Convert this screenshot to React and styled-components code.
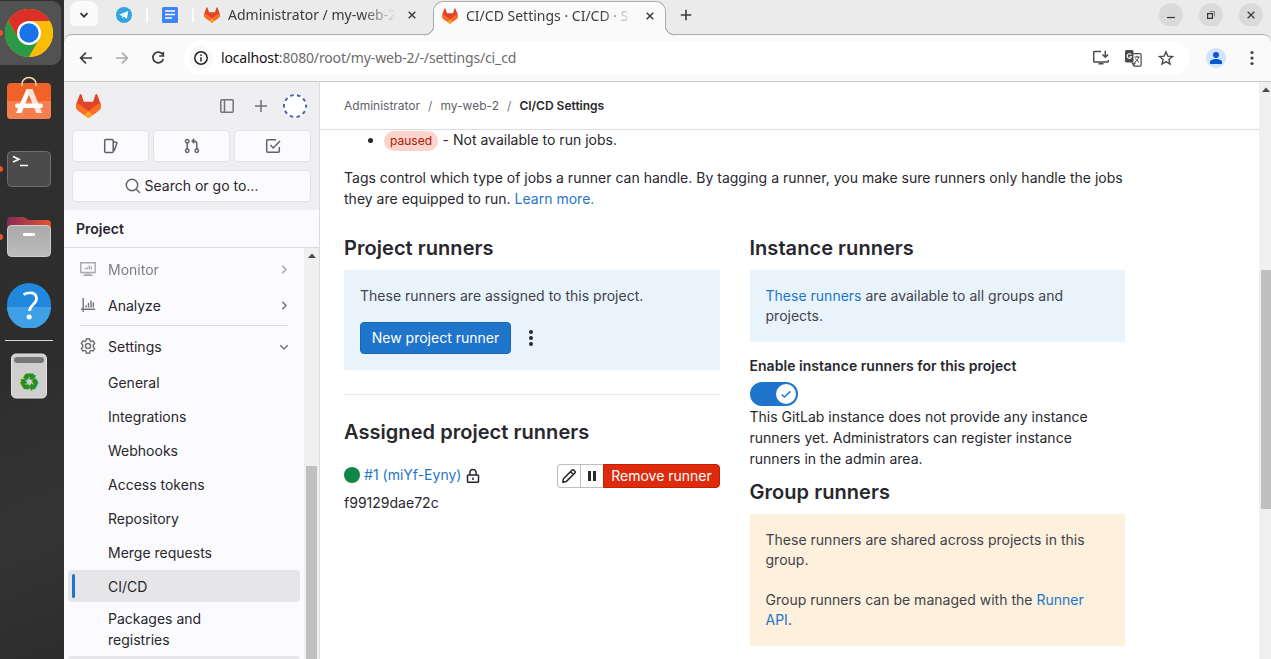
import React from "react";
import styled, { createGlobalStyle } from "styled-components";

const GlobalStyle = createGlobalStyle`
  * { box-sizing: border-box; }
  html, body { margin: 0; padding: 0; overflow: hidden; }
  h2, p, ul { margin: 0; padding: 0; }
  button { font: inherit; padding: 0; margin: 0; }
  svg { display: block; flex: none; }
`;

const uiFont = `"Noto Sans", "Open Sans", sans-serif`;
const pageFont = `Inter, "Liberation Sans", sans-serif`;

const Desktop = styled.div`
  display: flex;
  width: 1271px;
  height: 659px;
  overflow: hidden;
  background: #fff;
`;

/* ---------- dock ---------- */
const Dock = styled.aside`
  flex: none;
  display: flex;
  flex-direction: column;
  gap: 4px;
  width: 64px;
  padding-top: 1px;
  background: linear-gradient(160deg, #303030 0%, #2d2d2d 55%, #303030 62%, #343434 80%, #2d2d2d 100%);
`;
const DockItem = styled.div`
  flex: none;
  position: relative;
  display: flex;
  align-items: center;
  justify-content: center;
  width: 61px;
  height: 64px;
  padding-right: 3px;
  padding-bottom: ${(p) => p.$lift || 0}px;
  border-radius: 0 9px 9px 0;
  background: ${(p) => (p.$active ? "#525252" : "transparent")};
  &::before {
    content: "";
    display: ${(p) => (p.$running ? "block" : "none")};
    position: absolute;
    left: -3px;
    top: 29px;
    width: 6px;
    height: 6px;
    border-radius: 50%;
    background: #e95420;
  }
`;
const DockRule = styled.div`
  width: 48px;
  height: 1px;
  margin: -1px 0 -1px 5px;
  background: #d8d8d8;
`;
const Recycle = styled.text`
  font: 23px "DejaVu Sans", sans-serif;
`;

/* ---------- browser frame ---------- */
const Browser = styled.div`
  flex: 1;
  min-width: 0;
  display: flex;
  flex-direction: column;
`;
const TabStrip = styled.div`
  flex: none;
  display: flex;
  align-items: center;
  height: 34px;
  padding: 0 8px 4px 6px;
  background: #ebebeb;
  font-family: ${uiFont};
  font-size: 14px;
  color: #3b3b3b;
`;
const TabSearch = styled.button`
  width: 28px;
  height: 28px;
  margin-right: 18px;
  border: 0;
  border-radius: 9px;
  background: #fafafa;
  display: grid;
  place-items: center;
`;
const TabDivider = styled.i`
  width: 2px;
  height: 16px;
  margin: 0 ${(p) => p.$right}px 0 ${(p) => p.$left}px;
  border-radius: 1px;
  background: #fafafa;
`;
const Tab = styled.div`
  display: flex;
  align-items: center;
  height: 30px;
  width: ${(p) => p.$width}px;
`;
const ActiveTab = styled(Tab)`
  position: relative;
  align-self: flex-start;
  height: 35px;
  padding: 0 10px 6px 8px;
  margin-top: 1px;
  border: 1px solid #acacac;
  border-bottom: 0;
  border-radius: 10px 10px 0 0;
  background: #fafafa;
  z-index: 2;
  &::before,
  &::after {
    content: "";
    position: absolute;
    bottom: 0;
    width: 10px;
    height: 11px;
  }
  &::before {
    left: -10px;
    background: radial-gradient(circle at 0 0, #ebebeb 9px, #acacac 9.5px 10.2px, #fafafa 10.7px);
  }
  &::after {
    right: -10px;
    background: radial-gradient(circle at 100% 0, #ebebeb 9px, #acacac 9.5px 10.2px, #fafafa 10.7px);
  }
`;
const TabTitle = styled.span`
  flex: none;
  width: ${(p) => p.$width}px;
  margin-left: 8px;
  overflow: hidden;
  white-space: nowrap;
  line-height: 20px;
  mask-image: linear-gradient(90deg, #000 calc(100% - 34px), transparent);
`;
const Spacer = styled.span`
  flex: none;
  width: ${(p) => p.$width}px;
`;
const NewTab = styled.div`
  display: grid;
  place-items: center;
  width: 28px;
  height: 28px;
  margin-left: 6px;
`;
const WindowButtons = styled.div`
  display: flex;
  gap: 16px;
  margin-left: auto;
`;
const WindowButton = styled.button`
  width: 24px;
  height: 24px;
  border: 0;
  border-radius: 50%;
  background: #dadada;
  display: grid;
  place-items: center;
`;
const Toolbar = styled.div`
  flex: none;
  display: flex;
  align-items: center;
  height: 48px;
  padding: 0 11px 0 14px;
  border-top: 1px solid #acacac;
  border-bottom: 1px solid #c8c8c8;
  border-radius: 8px 8px 0 0;
  background: #fafafa;
  box-shadow: 0 -8px 0 #ebebeb;
`;
const NavIcons = styled.div`
  display: flex;
  gap: 20px;
`;
const Omnibox = styled.div`
  flex: 1;
  display: flex;
  align-items: center;
  height: 34px;
  margin: 0 16px 0 18px;
  padding: 0 16px 0 5px;
  border-radius: 17px;
  background: #fff;
  font-family: ${uiFont};
  font-size: 14px;
`;
const SiteInfo = styled.span`
  width: 24px;
  height: 24px;
  border-radius: 50%;
  background: #f8f8f8;
  display: grid;
  place-items: center;
`;
const Url = styled.span`
  flex: 1;
  margin: 0 0 2px 8px;
  letter-spacing: -0.15px;
  color: #6b6b6b;
  white-space: nowrap;
  b {
    font-weight: 400;
    color: #111;
  }
`;
const OmniboxActions = styled.div`
  display: flex;
  align-items: center;
  gap: 16px;
`;
const Profile = styled.div`
  width: 20px;
  height: 20px;
  margin-right: 18px;
  border-radius: 50%;
  overflow: hidden;
  background: #d3e3fd;
`;

/* ---------- page ---------- */
const Page = styled.div`
  flex: 1;
  min-height: 0;
  display: flex;
  font-family: ${pageFont};
  font-size: 14px;
  color: #28272d;
`;
const Sidebar = styled.nav`
  flex: none;
  display: flex;
  flex-direction: column;
  width: 256px;
  border-right: 1px solid #dcdcde;
  background: #fbfafd;
`;
const SidebarTop = styled.div`
  flex: none;
  height: 128px;
  padding: 12px 8px 8px;
  background: #efeff2;
`;
const BrandRow = styled.div`
  display: flex;
  align-items: center;
  height: 24px;
  padding: 0 4px;
  color: #737278;
`;
const BrandActions = styled.div`
  display: flex;
  align-items: center;
  gap: 18px;
  margin-left: auto;
  svg:last-child { margin-left: -4px; }
`;
const ShortcutRow = styled.div`
  display: flex;
  gap: 4px;
  margin: 12px 0 8px;
`;
const SidebarButton = styled.button`
  flex: 1;
  display: flex;
  align-items: center;
  justify-content: center;
  gap: 4px;
  width: 100%;
  height: 32px;
  border: 1px solid #e4e3e9;
  border-radius: 4px;
  background: #fbfafd;
  color: #626168;
  span {
    padding-bottom: 2px;
    color: #28272d;
  }
`;
const ContextTitle = styled.div`
  flex: none;
  height: 38px;
  padding: 0 12px;
  border-bottom: 1px solid #dcdcde;
  line-height: 37px;
  font-weight: 600;
`;
const NavScroller = styled.div`
  flex: 1;
  min-height: 0;
  display: flex;
  overflow: hidden;
`;
const NavList = styled.div`
  flex: 1;
  padding: 5px 4px 0;
  overflow: hidden;
`;
const NavItem = styled.div`
  display: flex;
  align-items: center;
  height: 32px;
  margin-bottom: 4px;
  padding: 0 8px 0 12px;
  color: #28272d;
  opacity: ${(p) => (p.$faded ? 0.6 : 1)};
  svg { color: #737278; }
  span { flex: 1; margin-left: 12px; }
`;
const NavRule = styled.div`
  height: 1px;
  margin: 0 12px 4px;
  background: #dcdbe6;
`;
const SubItem = styled.div`
  position: relative;
  min-height: ${(p) => (p.$lines === 2 ? 50 : 32)}px;
  margin-bottom: 2px;
  padding: ${(p) => (p.$lines === 2 ? "4px" : "6px")} 0 0 40px;
  line-height: 21px;
  border-radius: 4px;
  background: ${(p) => (p.$active ? "#e6e6e9" : "transparent")};
  &::before {
    content: "";
    display: ${(p) => (p.$current ? "block" : "none")};
    position: absolute;
    left: 4px;
    top: 4px;
    width: 3px;
    height: 24px;
    border-radius: 2px;
    background: #1f75cb;
  }
`;
const ScrollTrack = styled.div`
  flex: none;
  width: ${(p) => p.$width}px;
  padding: 0 ${(p) => p.$padRight}px 0 2px;
  background: #f0f0f0;
  svg { margin: 5px auto 0; }
`;
const ScrollThumb = styled.div`
  height: ${(p) => p.$height}px;
  margin-top: ${(p) => p.$offset}px;
  background: #c0c0c0;
`;
const Main = styled.main`
  flex: 1;
  min-width: 0;
  background: #fff;
`;
const Breadcrumbs = styled.div`
  display: flex;
  align-items: center;
  height: 48px;
  padding: 0 0 1px 24px;
  border-bottom: 1px solid #dcdcde;
  font-size: 12px;
  color: #626168;
  white-space: nowrap;
  i {
    width: 20.4px;
    text-align: center;
    font-style: normal;
    color: #737278;
  }
  strong {
    font-weight: 600;
    color: #28272d;
  }
`;
const Content = styled.div`
  width: 781px;
  margin-left: 24px;
  line-height: 21px;
  letter-spacing: 0.01px;
`;
const BulletRow = styled.div`
  display: flex;
  align-items: center;
  height: 21px;
  padding-left: 24px;
  &::before {
    content: "";
    width: 5px;
    height: 5px;
    margin-right: 11px;
    border-radius: 50%;
    background: #28272d;
  }
`;
const BulletText = styled.span`
  padding-bottom: 2px;
`;
const Badge = styled.span`
  height: 20px;
  margin: 1px 4.500px 0 0;
  padding: 0 6px;
  border-radius: 10px;
  background: #fdd4cd;
  color: #ae1800;
  font-size: 12px;
  line-height: 20px;
`;
const Paragraph = styled.p`
  margin-top: ${(p) => p.$top || 0}px;
  white-space: nowrap;
`;
const Link = styled.a`
  color: #1f75cb;
`;
const Columns = styled.div`
  display: grid;
  grid-template-columns: 376px 375.5px;
  gap: 29.5px;
  margin-top: 27px;
`;
const Heading = styled.h2`
  margin: ${(p) => p.$top || 0}px 0 ${(p) => p.$bottom ?? 10}px;
  font-size: 20px;
  font-weight: 600;
  line-height: 24px;
  letter-spacing: 0.05px;
  white-space: nowrap;
`;
const Panel = styled.section`
  padding: 16px;
  background: ${(p) => (p.$warn ? "#fdf0dd" : "#e9f3fc")};
  color: #43424a;
  line-height: 20px;
  white-space: nowrap;
  p + p { margin-top: 20px; }
`;
const PanelActions = styled.div`
  display: flex;
  align-items: center;
  gap: 12px;
  margin-top: 16px;
`;
const PrimaryButton = styled.button`
  width: 151px;
  height: 32px;
  border: 1px solid #1a66b4;
  border-radius: 4px;
  background: #1f75cb;
  color: #fff;
`;
const Rule = styled.div`
  height: 1px;
  margin-top: 24px;
  background: #e9e9ec;
`;
const RunnerRow = styled.div`
  display: flex;
  align-items: center;
  height: 24px;
`;
const StatusDot = styled.span`
  width: 16px;
  height: 16px;
  margin: -2px 4px 0 0;
  border-radius: 50%;
  background: #108548;
`;
const RunnerLink = styled(Link)`
  margin: -4px 4px 0 0;
`;
const ButtonGroup = styled.div`
  display: flex;
  margin-left: auto;
`;
const SmallButton = styled.button`
  display: grid;
  place-items: center;
  width: ${(p) => p.$width}px;
  height: 24px;
  border: 1px solid #bfbfc3;
  border-right-width: 0;
  border-radius: ${(p) => (p.$first ? "4px 0 0 4px" : 0)};
  background: #fff;
  color: #28272d;
`;
const DangerButton = styled.button`
  width: 117px;
  height: 24px;
  padding-bottom: 2px;
  border: 1px solid #c91c00;
  border-radius: 0 4px 4px 0;
  background: #dd2b0e;
  color: #fff;
`;
const FieldLabel = styled.div`
  margin: 14px 0 6px;
  font-weight: 600;
  line-height: 20px;
  letter-spacing: 0.03px;
  white-space: nowrap;
`;
const Toggle = styled.div`
  display: flex;
  justify-content: flex-end;
  width: 48px;
  height: 24px;
  padding: 2px;
  border-radius: 12px;
  background: #1f75cb;
`;
const Knob = styled.div`
  width: 20px;
  height: 20px;
  border-radius: 50%;
  background: #fff;
  display: grid;
  place-items: center;
`;

/* ---------- icons ---------- */
const Stroke = ({ size = 16, w = 1.5, color = "currentColor", children, box = 16 }) => (
  <svg width={size} height={size} viewBox={`0 0 ${box} ${box}`} fill="none" stroke={color} strokeWidth={w}>
    {children}
  </svg>
);
const Tanuki = ({ width, height }) => (
  <svg width={width} height={height} viewBox="0 0 25 24">
    <path fill="#E24329" d="m24.507 9.5-.034-.09L21.082.562a.896.896 0 0 0-1.694.091l-2.29 7.01H7.825L5.535.653a.898.898 0 0 0-1.694-.09L.451 9.411.416 9.5a6.297 6.297 0 0 0 2.09 7.278l.012.01.03.022 5.16 3.867 2.56 1.935 1.554 1.176a1.051 1.051 0 0 0 1.268 0l1.555-1.176 2.56-1.935 5.197-3.89.014-.01A6.297 6.297 0 0 0 24.507 9.5Z" />
    <path fill="#FC6D26" d="m24.507 9.5-.034-.09a11.44 11.44 0 0 0-4.56 2.051l-7.447 5.632 4.742 3.584 5.197-3.89.014-.01A6.297 6.297 0 0 0 24.507 9.5Z" />
    <path fill="#FCA326" d="m7.707 20.677 2.56 1.935 1.555 1.176a1.051 1.051 0 0 0 1.268 0l1.555-1.176 2.56-1.935-4.743-3.584-4.755 3.584Z" />
    <path fill="#FC6D26" d="M5.01 11.461a11.43 11.43 0 0 0-4.56-2.05L.416 9.5a6.297 6.297 0 0 0 2.09 7.278l.012.01.03.022 5.16 3.867 4.745-3.584-7.444-5.632Z" />
  </svg>
);
const CloseIcon = ({ size = 8, w = 1.5 }) => (
  <Stroke size={size} box={8} w={w} color="#3b3b3b"><path d="M.7.7l6.6 6.6M7.3.7L.7 7.3" /></Stroke>
);
const Kebab = ({ color, r = 1.7, step = 6 }) => (
  <svg width="16" height="16" viewBox="0 0 16 16" fill={color}>
    <circle cx="8" cy={8 - step} r={r} /><circle cx="8" cy="8" r={r} /><circle cx="8" cy={8 + step} r={r} />
  </svg>
);
const ArrowUp = () => (
  <svg width="8" height="5" viewBox="0 0 8 5"><path fill="#4a4a4a" d="M4 .5L8 5H0z" /></svg>
);

const ChromeLogo = () => (
  <svg width="48" height="48" viewBox="0 0 48 48">
    <circle cx="24" cy="24" r="24" fill="#fbbc05" />
    <path fill="#dd2f27" d="M3.2 12A24 24 0 0 1 44.8 12H24L13.6 30z" />
    <path fill="#2a9a47" d="M3.2 12A24 24 0 0 0 24 48l10.4-18-10.4 6-10.4-6z" />
    <path fill="#fbbc05" d="M44.8 12A24 24 0 0 1 24 48l10.4-18L24 12z" />
    <circle cx="24" cy="24" r="12" fill="#fff" /><circle cx="24" cy="24" r="9.7" fill="#1a73e8" />
  </svg>
);
const SoftwareLogo = () => (
  <svg width="46" height="46" viewBox="0 0 46 46">
    <rect x="1" y="7" width="44" height="36" rx="4" fill="#f26127" />
    <path d="M1 25h44v14a4 4 0 0 1-4 4H5a4 4 0 0 1-4-4z" fill="#f57f4e" />
    <path d="M16 10V8a7 6.500 0 0 1 14 0v2" stroke="#f3d9ab" strokeWidth="1.600" fill="none" />
    <path d="M20.500 13h5L36 37h-5.500L23 18.500 15.500 37H10z" fill="#fff" />
    <path d="M23 13l3.500 0L36 37h-5.500L21 14z" fill="#fde3d8" />
    <rect x="9" y="27.500" width="28" height="4.500" rx="2.200" fill="#fff" />
  </svg>
);
const TerminalLogo = () => (
  <svg width="46" height="38" viewBox="0 0 46 38">
    <rect x="1.500" y="1.500" width="43" height="35" rx="4" fill="#4b4b4b" stroke="#6e6e6e" />
    <path d="M7 6.500l6 2.700-6 2.800M14 15.500h8" stroke="#fff" strokeWidth="1.600" fill="none" />
  </svg>
);
const FilesLogo = () => (
  <svg width="46" height="42" viewBox="0 0 46 42">
    <defs>
      <linearGradient id="folderBack"><stop offset="0" stopColor="#852a57" /><stop offset="1" stopColor="#e5562a" /></linearGradient>
      <linearGradient id="folderFront" x2="0" y2="1"><stop offset="0" stopColor="#a9a9a9" /><stop offset="1" stopColor="#bcbcbc" /></linearGradient>
    </defs>
    <path d="M1 20V5a4 4 0 0 1 4-4h12c3 0 3.500 3 6.500 3H41a4 4 0 0 1 4 4v12z" fill="url(#folderBack)" />
    <rect x="1.500" y="9.500" width="43" height="31" rx="4" fill="url(#folderFront)" stroke="#cfcfcf" />
    <rect x="17" y="17" width="12" height="3" rx="1" fill="#fff" />
  </svg>
);
const HelpLogo = () => (
  <svg width="46" height="46" viewBox="0 0 46 46">
    <circle cx="23" cy="23" r="22" fill="#2088dd" />
    <path d="M1 25a22 22 0 0 0 44 0z" fill="#3fa0e8" />
    <path d="M17.500 12.500c7-3.500 13-1.500 13 4.200 0 5.500-7 6-7 12.300" stroke="#fff" strokeWidth="2.700" fill="none" />
    <circle cx="23.200" cy="35" r="2.500" fill="#fff" />
  </svg>
);
const TrashLogo = () => (
  <svg width="38" height="48" viewBox="0 0 38 48">
    <rect x="1.500" y="2" width="35" height="44" rx="4.500" fill="#cfcfcf" stroke="#e2e2e2" />
    <rect x="4" y="5" width="30" height="6" rx="3" fill="#777" />
    <Recycle x="19" y="38" textAnchor="middle" fill="#25901a" stroke="#25901a" strokeWidth="0.900">♻</Recycle>
  </svg>
);
const Telegram = () => (
  <svg width="16" height="16" viewBox="0 0 16 16">
    <circle cx="8" cy="8" r="8" fill="#31a5dd" />
    <path d="M3 7.800l9.300-3.900-1.500 8-2.900-2.100-1.500 1.500-.5-2.600z" fill="#fff" />
    <path d="M6 8.800l4.600-3.300-3.700 3.800-.4 1.900z" fill="#b5dcf2" />
  </svg>
);
const Docs = () => (
  <svg width="16" height="16" viewBox="0 0 16 16">
    <rect width="16" height="16" rx="1.500" fill="#3f83f8" />
    <path d="M3 4h10M3 7.500h10M3 11h7" stroke="#fff" strokeWidth="1.600" />
  </svg>
);
const Identicon = () => (
  <svg width="24" height="24" viewBox="0 0 24 24">
    <circle cx="12" cy="12" r="12" fill="#fff" />
    <circle cx="12" cy="12" r="11" fill="none" stroke="#4f63b8" strokeWidth="2" strokeDasharray="3.600 3.312" strokeDashoffset="1.800" />
  </svg>
);
const TranslateIcon = () => (
  <svg width="17" height="17" viewBox="0 0 17 17">
    <rect x="0" y="0" width="8.500" height="12.500" rx="1.500" fill="#4a4a4a" />
    <path d="M6.200 4.600A2.300 2.300 0 1 0 6.600 6.700H4.400" stroke="#fff" strokeWidth="1.100" fill="none" />
    <path d="M8.500 3.600h6.600a1 1 0 0 1 1 1v10.500a1 1 0 0 1-1 1H9L7 12.500" stroke="#4a4a4a" strokeWidth="1.200" fill="none" />
    <path d="M8 12.500h3L9 16z" fill="#4a4a4a" />
    <path d="M9.500 7h5.200M12 5.800V7M13.700 7c-.5 2.400-2 4-3.700 5M10.500 8.500c.7 1.500 2 2.900 3.500 3.800" stroke="#4a4a4a" fill="none" />
  </svg>
);

const MonitorIcon = () => (
  <Stroke w={1.4}><path d="M.8 1.700h14.400v9.800H.8zM6.500 11.500v2.700M9.500 11.500v2.700M3.200 14.300h9.600M5 8.500v-1.500M7.200 8.500V6M9.300 8.500V4.500M11.300 8.500V5.500" /></Stroke>
);
const AnalyzeIcon = () => (
  <Stroke w={1.4}><path d="M3.200 1v14M1 12.300h14M6 10.500V8.200M8.500 10.500V6M11 10.500V3.500M13.300 10.500V5.500" /></Stroke>
);
const GearIcon = () => (
  <Stroke><path strokeLinejoin="round" d="M6.500.8h3l.5 1.900 1.300.8 1.900-.6 1.500 2.600-1.400 1.400v2l1.400 1.500-1.500 2.600-1.900-.6-1.300.8-.5 2h-3l-.5-2-1.300-.8-1.900.6L1.300 10.400l1.400-1.500v-2L1.300 5.500l1.500-2.600 1.900.6 1.300-.8z" /><circle cx="8" cy="8" r="2.500" /></Stroke>
);
const ChevronRight = () => <Stroke><path d="M6.300 4.700L10 8.500l-3.700 3.800" /></Stroke>;
const ChevronDown = () => <Stroke><path d="M4.200 7.300L8 11l3.800-3.700" /></Stroke>;

const subItems = ["General", "Integrations", "Webhooks", "Access tokens", "Repository", "Merge requests"];

function DockBar() {
  return (
    <Dock>
      <DockItem $active $running><ChromeLogo /></DockItem>
      <DockItem $lift={4}><SoftwareLogo /></DockItem>
      <DockItem $running><TerminalLogo /></DockItem>
      <DockItem $running><FilesLogo /></DockItem>
      <DockItem $lift={1}><HelpLogo /></DockItem>
      <DockRule />
      <DockItem><TrashLogo /></DockItem>
    </Dock>
  );
}

function BrowserChrome() {
  return (
    <>
      <TabStrip>
        <TabSearch><Stroke size={10} box={10} w={1.8} color="#333"><path d="M1.500 3.200L5 6.700l3.500-3.500" /></Stroke></TabSearch>
        <Telegram />
        <TabDivider $left={14} $right={14} />
        <Docs />
        <TabDivider $left={14} $right={10} />
        <Tab $width={229}>
          <Tanuki width={16} height={16} />
          <TabTitle $width={168}>Administrator / my-web-2</TabTitle>
          <Spacer $width={12} />
          <CloseIcon />
        </Tab>
        <ActiveTab $width={233}>
          <Tanuki width={16} height={16} />
          <TabTitle $width={168}>CI/CD Settings · CI/CD · S</TabTitle>
          <Spacer $width={12} />
          <CloseIcon />
        </ActiveTab>
        <NewTab><Stroke size={12} box={12} w={1.6} color="#3b3b3b"><path d="M6 .8v10.400M.8 6h10.400" /></Stroke></NewTab>
        <WindowButtons>
          <WindowButton><Stroke size={8} box={8} w={1.200} color="#333"><path d="M0 6.500h8" /></Stroke></WindowButton>
          <WindowButton><Stroke size={8} box={8} w={1.200} color="#333"><path d="M.6 2.600h4.800v4.800H.6z" /><path d="M2.500.6h4.900v4.900" stroke="#777" strokeWidth="1" /></Stroke></WindowButton>
          <WindowButton><CloseIcon w={1.300} /></WindowButton>
        </WindowButtons>
      </TabStrip>
      <Toolbar>
        <NavIcons>
          <Stroke w={1.600} color="#3b3b3b"><path d="M14 8H3M8 2.600L2.600 8 8 13.400" /></Stroke>
          <Stroke w={1.600} color="#aaa"><path d="M2 8h11M8 2.600L13.400 8 8 13.400" /></Stroke>
          <Stroke w={1.700} color="#3b3b3b"><path d="M12.600 4.500A5.300 5.300 0 1 0 13.300 9" /><path d="M13.300 2v4H9.200" /></Stroke>
        </NavIcons>
        <Omnibox>
          <SiteInfo><Stroke color="#222"><circle cx="8" cy="8" r="6.200" /><path d="M8 7.200v4.200M8 4.500v1.600" /></Stroke></SiteInfo>
          <Url><b>localhost</b>:8080/root/my-web-2/-/settings/ci_cd</Url>
          <OmniboxActions>
            <Stroke color="#4a4a4a"><path d="M8 1.600H1.500a.8.8 0 0 0-.8.8v8.800c0 .5.400.8.800.8h13c.4 0 .8-.3.8-.8V10M5.500 13.800h5M12.300.8v6M9.500 4.500l2.800 2.800 2.800-2.800" /></Stroke>
            <TranslateIcon />
            <Stroke w={1.400} color="#4a4a4a"><path d="M8 1.800l1.800 4.300 4.700.4-3.600 3 1.100 4.600-4-2.500-4 2.500 1.100-4.600-3.600-3 4.700-.4z" /></Stroke>
          </OmniboxActions>
        </Omnibox>
        <Profile>
          <svg width="20" height="20" viewBox="0 0 20 20" fill="#0b57d0"><circle cx="10" cy="7" r="3" /><path d="M4 16v-2c0-2 3-3 6-3s6 1 6 3v2z" /></svg>
        </Profile>
        <Kebab color="#444" r={1.600} step={5.500} />
      </Toolbar>
    </>
  );
}

function ProjectSidebar() {
  return (
    <Sidebar>
      <SidebarTop>
        <BrandRow>
          <Tanuki width={25} height={24} />
          <BrandActions>
            <Stroke><rect x="1.800" y="1.800" width="12.400" height="12.400" rx="1" /><path d="M5.500 2v12" /></Stroke>
            <Stroke><path d="M8 2v12M2 8h12" /></Stroke>
            <Identicon />
          </BrandActions>
        </BrandRow>
        <ShortcutRow>
          <SidebarButton><Stroke><rect x="1.700" y="1.500" width="8.500" height="13" rx="1" /><path d="M10.500 3.500l3.500 1.400-3 8.200" /></Stroke></SidebarButton>
          <SidebarButton><Stroke><circle cx="3.200" cy="3.200" r="1.700" /><circle cx="3.200" cy="12.800" r="1.700" /><circle cx="12.800" cy="12.800" r="1.700" /><path d="M3.200 5v6M12.800 11V6c0-2-1-3-3-3H8.500M10.300.8L8.200 3l2.100 2.200" /></Stroke></SidebarButton>
          <SidebarButton><Stroke><path d="M11 1.700H2.700a1 1 0 0 0-1 1v10.600a1 1 0 0 0 1 1h10.600a1 1 0 0 0 1-1V9M5.500 7l2.700 3L15 3" /></Stroke></SidebarButton>
        </ShortcutRow>
        <SidebarButton>
          <Stroke><circle cx="7" cy="7" r="5.700" /><path d="M11 11l4 4" /></Stroke>
          <span>Search or go to…</span>
        </SidebarButton>
      </SidebarTop>
      <ContextTitle>Project</ContextTitle>
      <NavScroller>
        <NavList>
          <NavItem $faded><MonitorIcon /><span>Monitor</span><ChevronRight /></NavItem>
          <NavItem><AnalyzeIcon /><span>Analyze</span><ChevronRight /></NavItem>
          <NavRule />
          <NavItem><GearIcon /><span>Settings</span><ChevronDown /></NavItem>
          {subItems.map((label) => <SubItem key={label}>{label}</SubItem>)}
          <SubItem $active $current>CI/CD</SubItem>
          <SubItem $lines={2}>Packages and<br />registries</SubItem>
          <SubItem $active />
        </NavList>
        <ScrollTrack $width={15} $padRight={2}>
          <ArrowUp />
          <ScrollThumb $offset={208} $height={200} />
        </ScrollTrack>
      </NavScroller>
    </Sidebar>
  );
}

function RunnerSettings() {
  return (
    <Main>
      <Breadcrumbs>
        <span>Administrator</span><i>/</i><span>my-web-2</span><i>/</i><strong>CI/CD Settings</strong>
      </Breadcrumbs>
      <Content>
        <BulletRow><Badge>paused</Badge><BulletText>- Not available to run jobs.</BulletText></BulletRow>
        <Paragraph $top={16}>
          Tags control which type of jobs a runner can handle. By tagging a runner, you make sure runners only handle the jobs<br />
          they are equipped to run. <Link>Learn more.</Link>
        </Paragraph>
        <Columns>
          <div>
            <Heading>Project runners</Heading>
            <Panel>
              <p>These runners are assigned to this project.</p>
              <PanelActions>
                <PrimaryButton>New project runner</PrimaryButton>
                <Kebab color="#28272d" r={2} />
              </PanelActions>
            </Panel>
            <Rule />
            <Heading $top={25} $bottom={20}>Assigned project runners</Heading>
            <RunnerRow>
              <StatusDot />
              <RunnerLink>#1 (miYf-Eyny)</RunnerLink>
              <Stroke><rect x="2.500" y="7" width="11" height="7.200" rx=".8" /><path d="M4.900 7V4.500a3.100 3.100 0 0 1 6.200 0V7M8 9.500v2.500" /></Stroke>
              <ButtonGroup>
                <SmallButton $first $width={23}><Stroke><path strokeLinejoin="round" d="M1.800 14.200l.6-3.400 8.700-8.700a1.200 1.200 0 0 1 1.700 0l1.100 1.100a1.200 1.200 0 0 1 0 1.700l-8.700 8.700zM9.500 3.700l2.800 2.800" /></Stroke></SmallButton>
                <SmallButton $width={23}><Stroke w={3}><path d="M5.500 3v10M10.500 3v10" /></Stroke></SmallButton>
                <DangerButton>Remove runner</DangerButton>
              </ButtonGroup>
            </RunnerRow>
            <Paragraph $top={4}>f99129dae72c</Paragraph>
          </div>
          <div>
            <Heading>Instance runners</Heading>
            <Panel>
              <p><Link>These runners</Link> are available to all groups and<br />projects.</p>
            </Panel>
            <FieldLabel>Enable instance runners for this project</FieldLabel>
            <Toggle><Knob><Stroke size={14} w={1.600} color="#1f75cb"><path d="M3 8.500l3.200 3L13 5" /></Stroke></Knob></Toggle>
            <Paragraph>
              This GitLab instance does not provide any instance<br />
              runners yet. Administrators can register instance<br />
              runners in the admin area.
            </Paragraph>
            <Heading $top={11}>Group runners</Heading>
            <Panel $warn>
              <p>These runners are shared across projects in this<br />group.</p>
              <p>Group runners can be managed with the <Link>Runner<br />API</Link>.</p>
            </Panel>
          </div>
        </Columns>
      </Content>
    </Main>
  );
}

export default function App() {
  return (
    <>
      <GlobalStyle />
      <Desktop>
        <DockBar />
        <Browser>
          <BrowserChrome />
          <Page>
            <ProjectSidebar />
            <RunnerSettings />
            <ScrollTrack $width={12} $padRight={0}>
              <ArrowUp />
              <ScrollThumb $offset={178} $height={239} />
            </ScrollTrack>
          </Page>
        </Browser>
      </Desktop>
    </>
  );
}
